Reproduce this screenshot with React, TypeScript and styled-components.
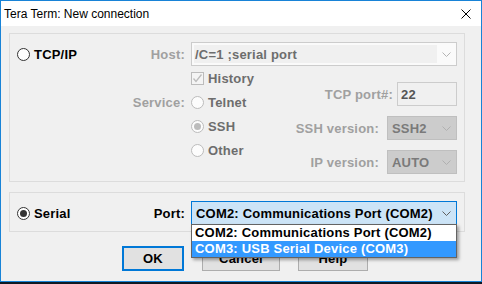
import React from 'react';
import styled, { createGlobalStyle } from 'styled-components';

const GlobalStyle = createGlobalStyle`
  html, body {
    margin: 0;
    padding: 0;
    background: #0e1822;
  }

  body {
    font-family: 'Liberation Sans', Arial, sans-serif;
  }
`;

const Window = styled.div`
  width: 482px;
  height: 282px;
  box-sizing: border-box;
  border: 1px solid #1883d7;
  display: flex;
  flex-direction: column;
  background: #f0f0f0;
`;

const TitleBar = styled.div`
  height: 25px;
  flex-shrink: 0;
  background: #ffffff;
  display: flex;
  align-items: center;
  justify-content: space-between;
  padding: 0 10px 0 3px;
  font-size: 12px;
  color: #000;
`;

const Client = styled.div`
  flex: 1;
  position: relative;
  padding: 7px 0 0 8px;
  font-size: 13px;
  font-weight: bold;
  letter-spacing: 0.2px;
`;

const GroupBox = styled.div<{ $h: number; $mt?: number }>`
  width: 456px;
  height: ${(p) => p.$h}px;
  margin-top: ${(p) => p.$mt ?? 0}px;
  box-sizing: border-box;
  border: 1px solid #dcdcdc;
  padding: 8px 7px 0 7px;
`;

const Row = styled.div`
  display: flex;
  align-items: center;
  height: 24px;
`;

const ModeChoice = styled.div`
  display: flex;
  align-items: center;
  gap: 4px;
  margin-right: auto;
  color: #000;
`;

const FieldLabel = styled.span<{ $dim?: boolean }>`
  color: ${(p) => (p.$dim ? '#a0a0a0' : '#000')};
  white-space: nowrap;
`;

const Radio = styled.span<{ $on?: boolean; $off?: boolean }>`
  width: 13px;
  height: 13px;
  box-sizing: border-box;
  border-radius: 50%;
  border: 1px solid ${(p) => (p.$off ? '#bcbcbc' : '#333333')};
  background: ${(p) => (p.$off ? '#fcfcfc' : '#ffffff')};
  display: inline-flex;
  align-items: center;
  justify-content: center;
  flex-shrink: 0;

  &::after {
    content: '';
    display: ${(p) => (p.$on ? 'block' : 'none')};
    width: 7px;
    height: 7px;
    border-radius: 50%;
    background: ${(p) => (p.$off ? '#bcbcbc' : '#333333')};
  }
`;

const CheckBox = styled.span`
  width: 13px;
  height: 13px;
  box-sizing: border-box;
  border: 1px solid #bcbcbc;
  background: #f4f4f4;
  display: inline-flex;
  align-items: center;
  justify-content: center;
  flex-shrink: 0;
`;

const Combo = styled.div<{ $w: number; $focus?: boolean }>`
  position: relative;
  width: ${(p) => p.$w}px;
  height: 24px;
  margin-left: 6px;
  box-sizing: border-box;
  border: 1px solid ${(p) => (p.$focus ? '#0078d7' : '#cccccc')};
  background: ${(p) => (p.$focus ? '#cce4f7' : '#fafafa')};
  display: flex;
  align-items: center;
  color: ${(p) => (p.$focus ? '#000' : '#6d6d6d')};
`;

const ComboEdit = styled.div`
  align-self: stretch;
  margin: 2px 0 2px 2px;
  width: 243px;
  background: #f0f0f0;
  display: flex;
  align-items: center;
  padding-left: 1px;
  box-sizing: border-box;
`;

const ComboText = styled.span`
  flex: 1;
  padding-left: 4px;
  white-space: nowrap;
`;

const Arrow = styled.span<{ $color: string }>`
  width: 17px;
  margin-left: auto;
  display: flex;
  justify-content: center;
  color: ${(p) => p.$color};
  padding-right: 1px;
`;

const Lower = styled.div`
  display: flex;
`;

const LabelCol = styled.div`
  width: 168px;
  display: flex;
  flex-direction: column;
  align-items: flex-end;
`;

const OptionsCol = styled.div`
  margin-left: 6px;
  display: flex;
  flex-direction: column;
`;

const Option = styled.div`
  height: 24px;
  display: flex;
  align-items: center;
  gap: 4px;
  color: #6d6d6d;
`;

const RightCol = styled.div`
  flex: 1;
  display: flex;
  flex-direction: column;
  align-items: flex-end;
  padding-top: 16px;
  gap: 10px;
`;

const FieldRow = styled.div<{ $gap: number }>`
  display: flex;
  align-items: center;
  gap: ${(p) => p.$gap}px;
`;

const Edit = styled.div`
  width: 60px;
  height: 24px;
  box-sizing: border-box;
  border: 1px solid #cccccc;
  background: #f0f0f0;
  color: #555555;
  display: flex;
  align-items: center;
  padding-left: 3px;
`;

const DropSelect = styled.div`
  width: 70px;
  height: 24px;
  box-sizing: border-box;
  border: 1px solid #bfbfbf;
  background: #cccccc;
  color: #7a7a7a;
  display: flex;
  align-items: center;
  padding-left: 4px;
`;

const DropList = styled.div`
  position: absolute;
  left: -1px;
  top: 100%;
  width: 266px;
  box-sizing: border-box;
  border: 1px solid #646464;
  background: #ffffff;
  z-index: 10;
  box-shadow: 2px 2px 3px rgba(0, 0, 0, 0.35);
`;

const DropItem = styled.div<{ $sel?: boolean }>`
  height: 16px;
  line-height: 16px;
  padding-left: 3px;
  white-space: nowrap;
  background: ${(p) => (p.$sel ? '#3399ff' : '#ffffff')};
  color: ${(p) => (p.$sel ? '#ffffff' : '#000000')};
`;

const ButtonRow = styled.div`
  display: flex;
  gap: 18px;
  margin-top: 14px;
  padding-left: 113px;
`;

const Button = styled.div<{ $w: number; $default?: boolean }>`
  width: ${(p) => p.$w}px;
  height: 25px;
  box-sizing: border-box;
  border: ${(p) => (p.$default ? '2px solid #0078d7' : '1px solid #adadad')};
  background: #e1e1e1;
  display: flex;
  align-items: center;
  justify-content: center;
  color: #000;
`;

const Chevron = () => (
  <svg width="9" height="5" viewBox="0 0 9 5">
    <polyline points="0.5,0.5 4.5,4.5 8.5,0.5" fill="none" stroke="currentColor" strokeWidth="1" />
  </svg>
);

const Check = () => (
  <svg width="11" height="11" viewBox="0 0 11 11">
    <polyline points="1.5,5.5 4,8.5 9.5,1.5" fill="none" stroke="#bcbcbc" strokeWidth="1.3" />
  </svg>
);

const CloseIcon = () => (
  <svg width="10" height="10" viewBox="0 0 10 10">
    <path d="M0.5 0.5 L9.5 9.5 M9.5 0.5 L0.5 9.5" stroke="#000" strokeWidth="1" />
  </svg>
);

const App = () => {
  return (
    <Window>
      <GlobalStyle />
      <TitleBar>
        <span>Tera Term: New connection</span>
        <CloseIcon />
      </TitleBar>
      <Client>
        <GroupBox $h={149}>
          <Row>
            <ModeChoice>
              <Radio />
              TCP/IP
            </ModeChoice>
            <FieldLabel $dim>Host:</FieldLabel>
            <Combo $w={266}>
              <ComboEdit>/C=1 ;serial port</ComboEdit>
              <Arrow $color="#b4b4b4">
                <Chevron />
              </Arrow>
            </Combo>
          </Row>
          <Lower>
            <LabelCol>
              <Row />
              <Row>
                <FieldLabel $dim>Service:</FieldLabel>
              </Row>
            </LabelCol>
            <OptionsCol>
              <Option>
                <CheckBox>
                  <Check />
                </CheckBox>
                History
              </Option>
              <Option>
                <Radio $off />
                Telnet
              </Option>
              <Option>
                <Radio $off $on />
                SSH
              </Option>
              <Option>
                <Radio $off />
                Other
              </Option>
            </OptionsCol>
            <RightCol>
              <FieldRow $gap={4}>
                <FieldLabel $dim>TCP port#:</FieldLabel>
                <Edit>22</Edit>
              </FieldRow>
              <FieldRow $gap={8}>
                <FieldLabel $dim>SSH version:</FieldLabel>
                <DropSelect>
                  SSH2
                  <Arrow $color="#b0b0b0">
                    <Chevron />
                  </Arrow>
                </DropSelect>
              </FieldRow>
              <FieldRow $gap={8}>
                <FieldLabel $dim>IP version:</FieldLabel>
                <DropSelect>
                  AUTO
                  <Arrow $color="#b0b0b0">
                    <Chevron />
                  </Arrow>
                </DropSelect>
              </FieldRow>
            </RightCol>
          </Lower>
        </GroupBox>

        <GroupBox $h={40} $mt={10}>
          <Row>
            <ModeChoice>
              <Radio $on />
              Serial
            </ModeChoice>
            <FieldLabel>Port:</FieldLabel>
            <Combo $w={266} $focus>
              <ComboText>COM2: Communications Port (COM2)</ComboText>
              <Arrow $color="#606060">
                <Chevron />
              </Arrow>
              <DropList>
                <DropItem>COM2: Communications Port (COM2)</DropItem>
                <DropItem $sel>COM3: USB Serial Device (COM3)</DropItem>
              </DropList>
            </Combo>
          </Row>
        </GroupBox>

        <ButtonRow>
          <Button $w={62} $default>
            OK
          </Button>
          <Button $w={78}>Cancel</Button>
          <Button $w={70}>Help</Button>
        </ButtonRow>
      </Client>
    </Window>
  );
};

export default App;
